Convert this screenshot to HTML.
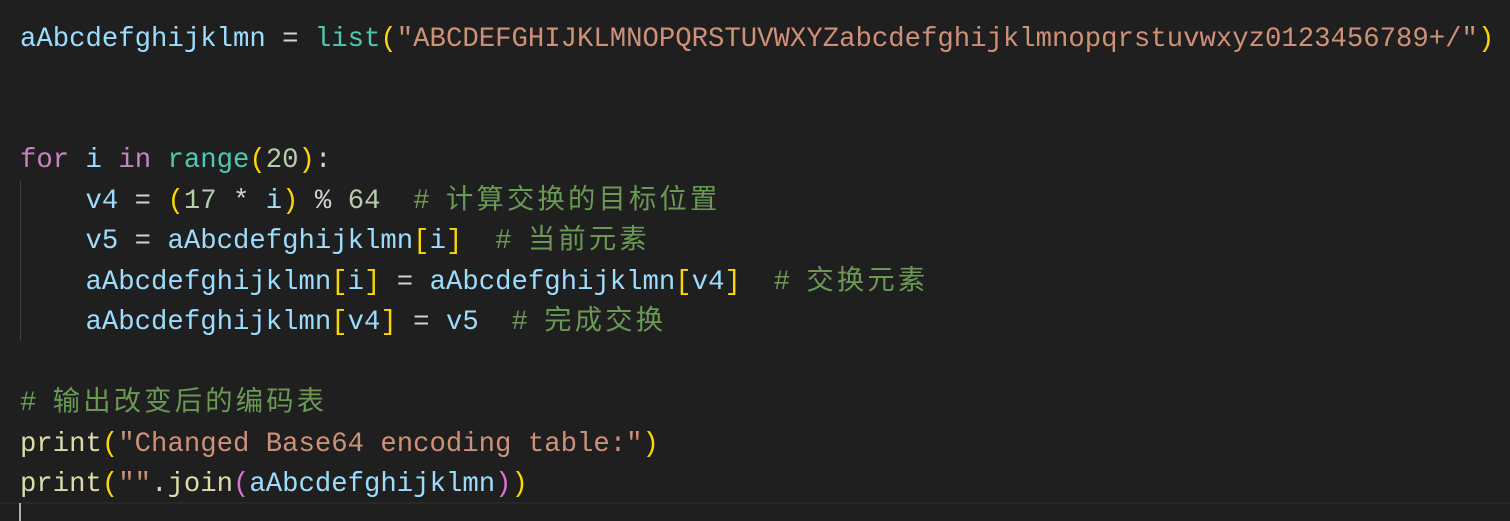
<!DOCTYPE html>
<html><head><meta charset="utf-8"><style>
html,body{margin:0;padding:0;background:#1f1f1f;width:1510px;height:521px;overflow:hidden}
.code{position:absolute;left:20px;top:20px;font-family:"Liberation Mono","Noto Sans CJK SC",monospace;font-size:27.3px;line-height:40.45px;white-space:pre;color:#d4d4d4}
.v{color:#9cdcfe}.f{color:#dcdcaa}.t{color:#4ec9b0}.s{color:#ce9178}.k{color:#c586c0}.n{color:#b5cea8}.c{color:#6a9955}
.y{color:#ffd700}.p{color:#da70d6}
.z{letter-spacing:3.2px}
.guide{position:absolute;left:20px;top:180px;width:1px;height:161px;background:#404040}
.cur{position:absolute;left:0;top:502px;width:1510px;height:19px;border-top:2px solid #282828;box-sizing:border-box}
.caret{position:absolute;left:19px;top:503px;width:2px;height:18px;background:#aeafad}
</style></head><body>
<div class="guide"></div>
<div class="cur"></div>
<div class="caret"></div>
<div class="code"><span class="v">aAbcdefghijklmn</span> = <span class="t">list</span><span class="y">(</span><span class="s">"ABCDEFGHIJKLMNOPQRSTUVWXYZabcdefghijklmnopqrstuvwxyz0123456789+/"</span><span class="y">)</span>


<span class="k">for</span> <span class="v">i</span> <span class="k">in</span> <span class="t">range</span><span class="y">(</span><span class="n">20</span><span class="y">)</span>:
    <span class="v">v4</span> = <span class="y">(</span><span class="n">17</span> * <span class="v">i</span><span class="y">)</span> % <span class="n">64</span>  <span class="c"># <span class="z">计算交换的目标位置</span></span>
    <span class="v">v5</span> = <span class="v">aAbcdefghijklmn</span><span class="y">[</span><span class="v">i</span><span class="y">]</span>  <span class="c"># <span class="z">当前元素</span></span>
    <span class="v">aAbcdefghijklmn</span><span class="y">[</span><span class="v">i</span><span class="y">]</span> = <span class="v">aAbcdefghijklmn</span><span class="y">[</span><span class="v">v4</span><span class="y">]</span>  <span class="c"># <span class="z">交换元素</span></span>
    <span class="v">aAbcdefghijklmn</span><span class="y">[</span><span class="v">v4</span><span class="y">]</span> = <span class="v">v5</span>  <span class="c"># <span class="z">完成交换</span></span>

<span class="c"># <span class="z">输出改变后的编码表</span></span>
<span class="f">print</span><span class="y">(</span><span class="s">"Changed Base64 encoding table:"</span><span class="y">)</span>
<span class="f">print</span><span class="y">(</span><span class="s">""</span>.<span class="f">join</span><span class="p">(</span><span class="v">aAbcdefghijklmn</span><span class="p">)</span><span class="y">)</span></div>
</body></html>
